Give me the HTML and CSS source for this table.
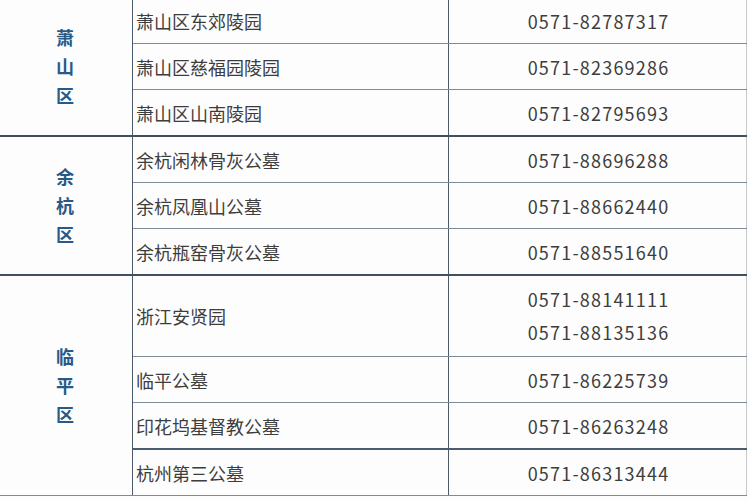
FILE: index.html
```html
<!DOCTYPE html>
<html lang="zh-CN">
<head>
<meta charset="utf-8">
<link rel="stylesheet" href="styles.css">
</head>
<body>
<table class="tbl">
  <colgroup><col class="c-dist"><col class="c-name"><col class="c-tel"></colgroup>
  <tbody>
    <tr class="r">
      <td class="dist" rowspan="3"><span>萧</span><span>山</span><span>区</span></td>
      <td class="name">萧山区东郊陵园</td><td class="tel">0571-82787317</td>
    </tr>
    <tr class="r"><td class="name">萧山区慈福园陵园</td><td class="tel">0571-82369286</td></tr>
    <tr class="r"><td class="name">萧山区山南陵园</td><td class="tel">0571-82795693</td></tr>
    <tr class="r sep">
      <td class="dist" rowspan="3"><span>余</span><span>杭</span><span>区</span></td>
      <td class="name">余杭闲林骨灰公墓</td><td class="tel">0571-88696288</td>
    </tr>
    <tr class="r"><td class="name">余杭凤凰山公墓</td><td class="tel">0571-88662440</td></tr>
    <tr class="r"><td class="name">余杭瓶窑骨灰公墓</td><td class="tel">0571-88551640</td></tr>
    <tr class="r2 sep">
      <td class="dist" rowspan="4"><span>临</span><span>平</span><span>区</span></td>
      <td class="name">浙江安贤园</td><td class="tel"><div class="l1">0571-88141111</div><div class="l2">0571-88135136</div></td>
    </tr>
    <tr class="r"><td class="name">临平公墓</td><td class="tel">0571-86225739</td></tr>
    <tr class="r"><td class="name">印花坞基督教公墓</td><td class="tel">0571-86263248</td></tr>
    <tr class="r dark"><td class="name">杭州第三公墓</td><td class="tel">0571-86313444</td></tr>
  </tbody>
</table>
</body>
</html>
```

FILE: styles.css
```css
html, body {
  margin: 0;
  padding: 0;
  background: #fdfdfd;
  overflow: hidden;
  width: 750px;
  height: 500px;
}
.tbl {
  border-collapse: collapse;
  margin-top: -3px;
  margin-left: -1px;
  width: 748px;
  table-layout: fixed;
  font-family: "Noto Sans CJK SC", "Noto Sans", sans-serif;
  font-size: 18px;
  color: #3d3d3d;
}
.c-dist { width: 133px; }
.c-name { width: 316px; }
td {
  padding: 0;
  border-top: 1px solid #7f8b97;
  border-bottom: 1px solid #7f8b97;
  border-left: 1.5px solid #4c5a68;
  border-right: 1.5px solid #4c5a68;
  vertical-align: middle;
}
td:first-child { border-left: 1px solid #e6e6e6; }
td.tel { border-right: 1px solid #c9c9c9; }
.r td { height: 45px; }
.r2 td { height: 80px; }
.sep td, .sep td.dist { border-top: 2px solid #3e5163; }
.dark td { border-top: 2px solid #4a5c6d; }
.dist {
  text-align: center;
  color: #285a88;
  font-weight: 700;
  font-size: 18px;
  line-height: 29px;
  padding-right: 2px;
}
.dist span { display: block; }
.name {
  padding-left: 3px;
  white-space: nowrap;
}
.tel {
  text-align: center;
  letter-spacing: 1.2px;
  padding-left: 2px;
}
.l1, .l2 { line-height: 33px; }
```
